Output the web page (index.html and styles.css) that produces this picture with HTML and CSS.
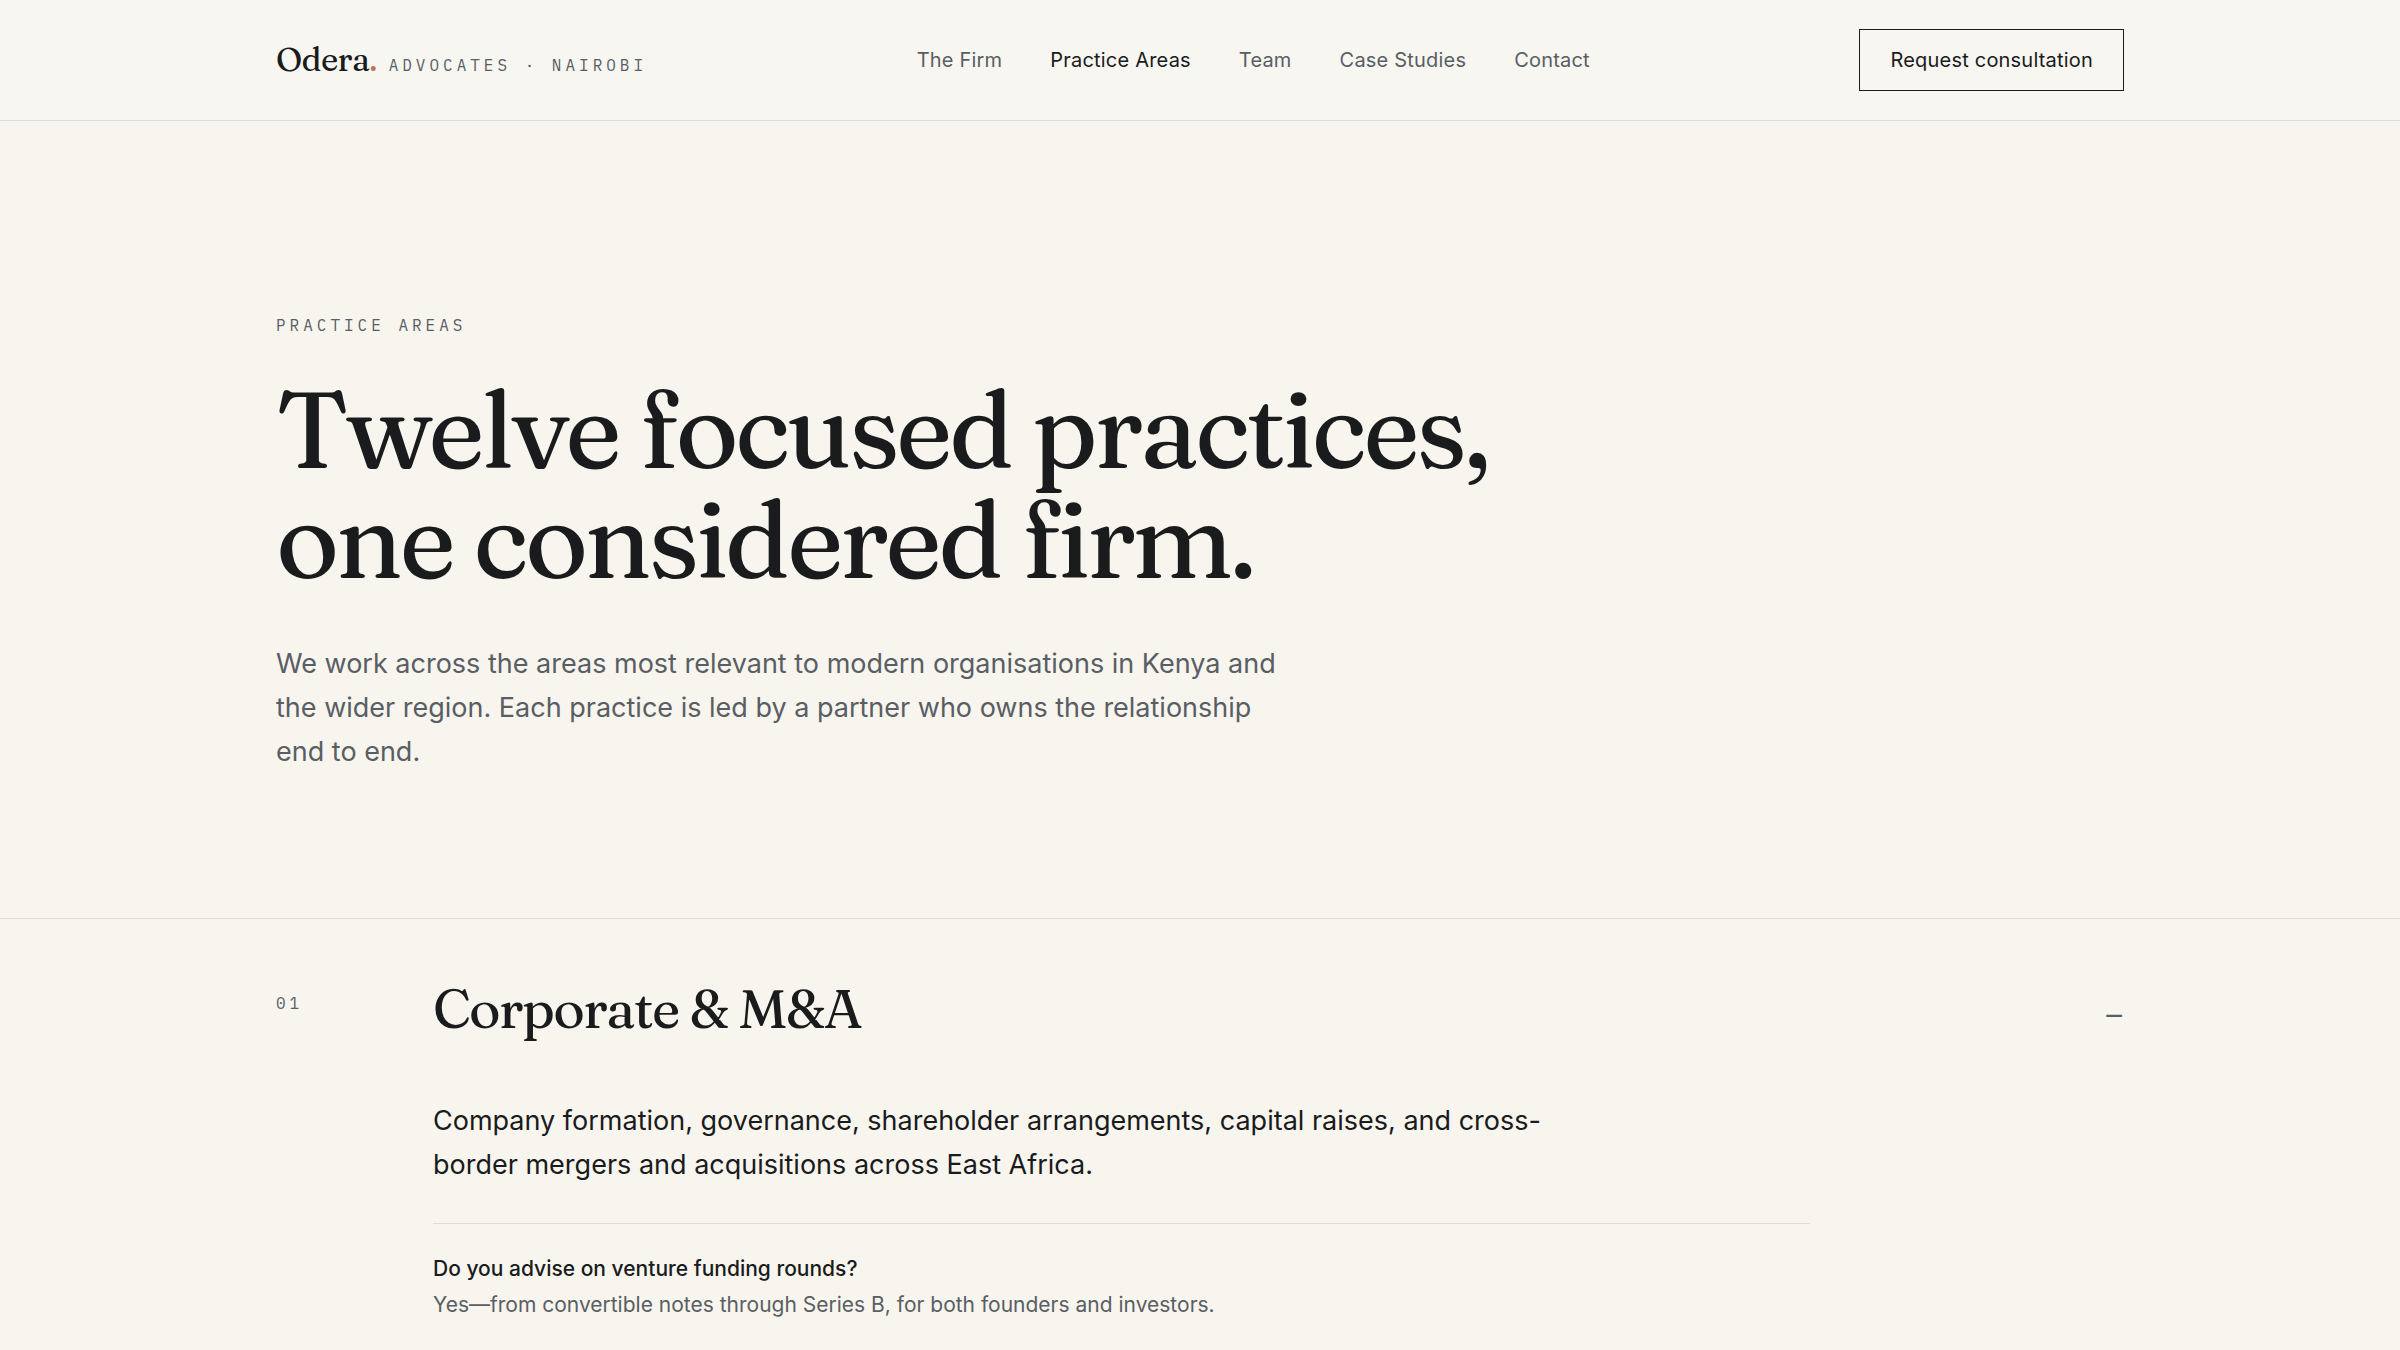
FILE: index.html
```html
<!DOCTYPE html>
<html lang="en">
<head>
  <meta charset="UTF-8" />
  <meta name="viewport" content="width=device-width, initial-scale=1.0" />
  <title>Practice Areas | Odera Advocates</title>
  <link rel="stylesheet" href="styles.css">
</head>
<body>
  <header class="site-header">
    <div class="container header-inner">
      <a href="#" class="brand">
        <span class="brand-name">Odera<span class="dot">.</span></span>
        <span class="mono">Advocates · Nairobi</span>
      </a>
      <nav>
        <ul>
          <li><a href="#firm">The Firm</a></li>
          <li><a href="#practice" class="active">Practice Areas</a></li>
          <li><a href="#team">Team</a></li>
          <li><a href="#cases">Case Studies</a></li>
          <li><a href="#contact">Contact</a></li>
        </ul>
      </nav>
      <a href="#contact" class="btn">Request consultation</a>
    </div>
  </header>

  <main>
    <section class="hero">
      <div class="container">
        <p class="mono">Practice Areas</p>
        <h1>Twelve focused practices, <br>one considered firm.</h1>
        <p class="lead">We work across the areas most relevant to modern organisations in Kenya and the wider region. Each practice is led by a partner who owns the relationship end to end.</p>
      </div>
    </section>

    <section id="practice" class="practice">
      <div class="container grid">
        <span class="mono number">01</span>
        <h2>Corporate &amp; M&amp;A</h2>
        <button type="button" class="toggle" aria-expanded="true" aria-controls="corporate" aria-label="Collapse Corporate &amp; M&amp;A">−</button>
        <div id="corporate" class="details">
          <p class="summary">Company formation, governance, shareholder arrangements, capital raises, and cross-border mergers and acquisitions across East Africa.</p>
          <dl class="faq">
            <dt>Do you advise on venture funding rounds?</dt>
            <dd>Yes—from convertible notes through Series B, for both founders and investors.</dd>
          </dl>
        </div>
      </div>
    </section>
  </main>

  <script>
    const toggle = document.querySelector(".toggle");
    const details = document.getElementById("corporate");

    toggle.addEventListener("click", () => {
      details.hidden = !details.hidden;
      toggle.setAttribute("aria-expanded", String(!details.hidden));
      toggle.textContent = details.hidden ? "+" : "−";
    });
  </script>
</body>
</html>
```
FILE: styles.css
```css
* { margin: 0; padding: 0; box-sizing: border-box; }
body { font-family: Inter, "Liberation Sans", sans-serif; background-color: #f7f5ee; color: #1a1b1c; }
a { color: inherit; text-decoration: none; }
.container { width: 100%; max-width: 1920px; margin: 0 auto; padding: 0 36px; }
.mono { font-family: "IBM Plex Mono", "Liberation Mono", monospace; font-size: 16px; line-height: 25px; letter-spacing: 4px; text-transform: uppercase; color: #5a5e64; }

.site-header { background: #f7f6f1; border-bottom: 1px solid #deded9; }
.header-inner { display: flex; justify-content: space-between; align-items: center; min-height: 120px; }
.brand { display: flex; align-items: baseline; gap: 12px; padding-bottom: 3px; }
.brand-name { font-family: Fraunces, "Liberation Serif", serif; font-size: 33px; line-height: 48px; letter-spacing: -0.02em; }
.dot { color: #b87a56; }
nav ul { display: flex; gap: 48px; list-style: none; }
nav a { color: #5a5e64; }
nav a, .btn { font-size: 20px; line-height: 28px; letter-spacing: 0.01em; }
nav a.active { color: #1a1b1c; }
.btn { padding: 16px 30px; border: 1px solid #1a1b1c; }

.hero { padding: 192px 0 144px; border-bottom: 1px solid #deded9; }
h1, h2 { font-family: Fraunces, "Liberation Serif", serif; font-weight: 400; letter-spacing: -0.03em; }
h1 { margin-top: 36px; font-size: 108px; line-height: 110px; letter-spacing: -0.033em; }
.lead, .summary { font-size: 27px; line-height: 44px; }
.lead { max-width: 1008px; margin-top: 48px; color: #5a5e64; }

.practice { padding: 54px 0 24px; }
.grid { display: grid; grid-template-columns: repeat(12, 1fr); column-gap: 36px; }
.number { padding-top: 18px; }
h2 { grid-column: 2 / 12; font-size: 54px; line-height: 72px; }
.toggle { justify-self: end; align-self: end; border: none; background: none; font-family: "IBM Plex Mono", "Liberation Mono", monospace; font-size: 33px; line-height: 62px; color: #5a5e64; cursor: pointer; }
.details { grid-column: 2 / 11; margin-top: 54px; }
.summary { max-width: 1152px; }
.faq { margin-top: 36px; padding-top: 27px; border-top: 1px solid #deded9; font-size: 21px; line-height: 36px; }
.faq dt { font-weight: 500; }
.faq dd { color: #5a5e64; }
```
